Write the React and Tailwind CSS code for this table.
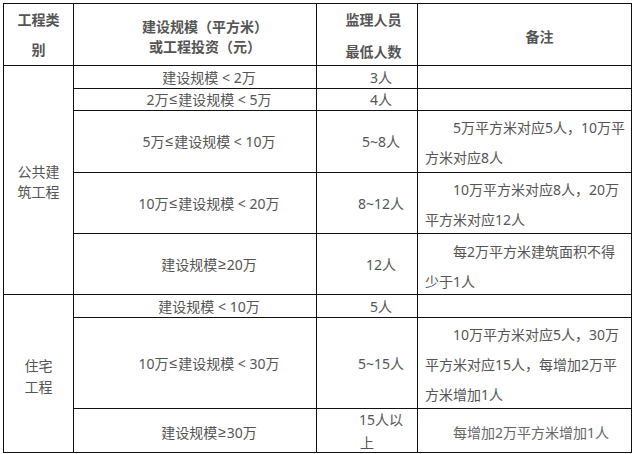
import React from "react";

const cell = "bg-white flex items-center text-[14px] text-[#555]";

// narrow math signs like the source font, CJK font draws them full width
const Le = () => <span className="font-['Liberation_Sans'] mx-[1px]">≤</span>;
const Ge = () => <span className="font-['Liberation_Sans'] mx-[1px]">≥</span>;

const App = () => {
    return (
        <div className="w-[636px] h-[454px] bg-white pt-[3px] pl-[3px] font-['Noto_Sans','Noto_Sans_CJK_SC',sans-serif]">
            <div className="w-[629px] grid grid-cols-[69px_242px_100px_213px] grid-rows-[61px_22px_21px_61px_60px_60px_22px_90px_43px] gap-px p-px bg-[#111]">
                {/* header */}
                <div className={`${cell} justify-center text-center font-bold text-[#333] leading-[30px] pt-[1px]`}>
                    <p>工程类<br />别</p>
                </div>
                <div className={`${cell} justify-center text-center font-bold text-[#333] leading-[20px] pl-[20px] pt-[5px]`}>
                    <p>建设规模（平方米）<br />或工程投资（元）</p>
                </div>
                <div className={`${cell} justify-center text-center font-bold text-[#333] leading-[32px] pl-[13px] pt-[3px]`}>
                    <p>监理人员<br />最低人数</p>
                </div>
                <div className={`${cell} justify-center font-bold text-[#333] pl-[30px] pt-[3px]`}>
                    <p>备注</p>
                </div>

                {/* 公共建筑工程 */}
                <div className={`${cell} row-span-5 justify-center text-center leading-[20px] pt-[3px]`}>
                    <p>公共建<br />筑工程</p>
                </div>
                <div className={`${cell} justify-center pl-[28px] whitespace-pre`}>建设规模 {"<"} 2万</div>
                <div className={`${cell} justify-center pl-[28px]`}>3人</div>
                <div className={cell}></div>

                <div className={`${cell} justify-center pl-[28px] whitespace-pre`}>2万<Le />建设规模 {"<"} 5万</div>
                <div className={`${cell} justify-center pl-[28px]`}>4人</div>
                <div className={cell}></div>

                <div className={`${cell} justify-center pl-[28px] whitespace-pre`}>5万<Le />建设规模 {"<"} 10万</div>
                <div className={`${cell} justify-center pl-[28px]`}>5~8人</div>
                <div className={`${cell} pl-[7px] leading-[30px] pt-[3px]`}>
                    <p className="indent-[2em] whitespace-nowrap">5万平方米对应5人，10万平<br />方米对应8人</p>
                </div>

                <div className={`${cell} justify-center pl-[28px] whitespace-pre`}>10万<Le />建设规模 {"<"} 20万</div>
                <div className={`${cell} justify-center pl-[28px]`}>8~12人</div>
                <div className={`${cell} pl-[7px] leading-[30px] pt-[3px]`}>
                    <p className="indent-[2em] whitespace-nowrap">10万平方米对应8人，20万<br />平方米对应12人</p>
                </div>

                <div className={`${cell} justify-center pl-[28px]`}>建设规模<Ge />20万</div>
                <div className={`${cell} justify-center pl-[28px]`}>12人</div>
                <div className={`${cell} pl-[7px] leading-[30px] pt-[5px]`}>
                    <p className="indent-[2em] whitespace-nowrap">每2万平方米建筑面积不得<br />少于1人</p>
                </div>

                {/* 住宅工程 */}
                <div className={`${cell} row-span-3 justify-center text-center leading-[21px] pt-[4px]`}>
                    <p>住宅<br />工程</p>
                </div>
                <div className={`${cell} justify-center pl-[28px] whitespace-pre`}>建设规模 {"<"} 10万</div>
                <div className={`${cell} justify-center pl-[28px]`}>5人</div>
                <div className={cell}></div>

                <div className={`${cell} justify-center pl-[28px] whitespace-pre`}>10万<Le />建设规模 {"<"} 30万</div>
                <div className={`${cell} justify-center pl-[28px]`}>5~15人</div>
                <div className={`${cell} pl-[7px] leading-[30px] pt-[3px]`}>
                    <p className="indent-[2em] whitespace-nowrap">10万平方米对应5人，30万<br />平方米对应15人，每增加2万平<br />方米增加1人</p>
                </div>

                <div className={`${cell} justify-center pl-[28px] pt-[3px]`}>建设规模<Ge />30万</div>
                <div className={`${cell} justify-center text-center leading-[23px] px-[7px]`}>
                    <p className="indent-[2em] whitespace-nowrap">15人以<br />上</p>
                </div>
                <div className={`${cell} pl-[7px] pt-[3px] text-[#666]`}>
                    <p className="indent-[2em] whitespace-nowrap">每增加2万平方米增加1人</p>
                </div>
            </div>
        </div>
    );
};

export default App;
